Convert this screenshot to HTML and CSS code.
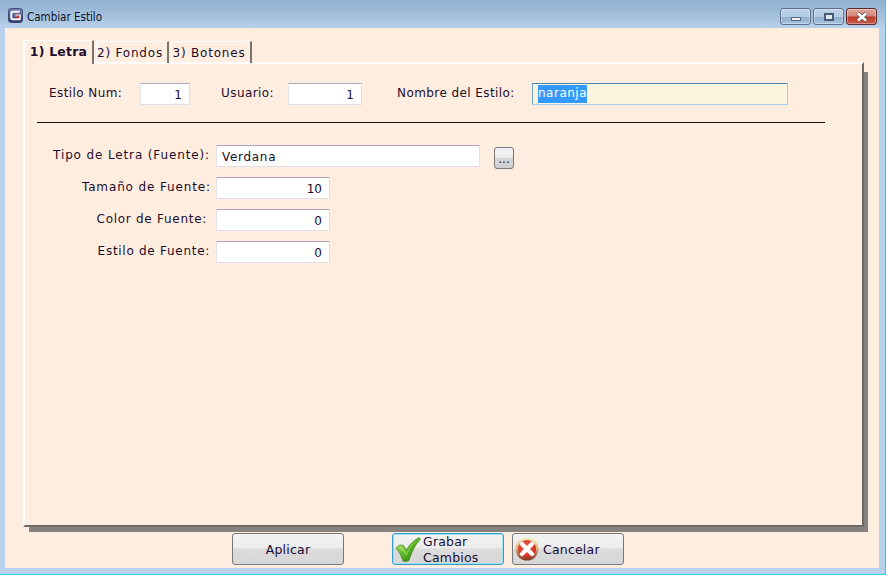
FILE: index.html
```html
<!DOCTYPE html>
<html lang="es">
<head>
<meta charset="utf-8">
<title>Cambiar Estilo</title>
<link rel="stylesheet" href="styles.css">
</head>
<body>
<div class="window">
  <header class="titlebar">
    <svg class="app-icon" width="15" height="15" viewBox="0 0 16 16">
      <defs><linearGradient id="ai" x1="0" y1="0" x2="0" y2="1"><stop offset="0" stop-color="#7f89b8"/><stop offset="1" stop-color="#2a3268"/></linearGradient></defs>
      <rect x="0.5" y="0.5" width="15" height="15" rx="3" fill="url(#ai)" stroke="#3c4470"/>
      <path d="M12.5 4H5.5Q3.5 4 3.5 6V10Q3.5 12 5.5 12H12.5V8H8" fill="none" stroke="#f2f4f8" stroke-width="2.2"/>
      <rect x="9" y="8" width="3" height="2.5" fill="#d8302c"/>
    </svg>
    <span class="title">Cambiar Estilo</span>
    <div class="caption-buttons">
      <div class="cap cap-min"><span class="glyph-min"></span></div>
      <div class="cap cap-max"><span class="glyph-max"></span></div>
      <div class="cap cap-close">
        <svg width="14" height="10" viewBox="0 0 14 10"><path d="M3 1.5L11 8.5M11 1.5L3 8.5" stroke="#555" stroke-width="4.2"/><path d="M3 1.5L11 8.5M11 1.5L3 8.5" stroke="#fff" stroke-width="2.6"/></svg>
      </div>
    </div>
  </header>
  <main class="client">
    <nav class="tabs">
      <div class="tab tab-active">1) Letra</div>
      <div class="tab tab-2">2) Fondos</div>
      <div class="tab tab-3">3) Botones</div>
    </nav>
    <section class="panel">
      <div class="top-row">
        <label class="lbl lbl-num">Estilo Num:</label>
        <div class="field f-num num">1</div>
        <label class="lbl lbl-usr">Usuario:</label>
        <div class="field f-usr num">1</div>
        <label class="lbl lbl-name">Nombre del Estilo:</label>
        <div class="field f-name"><span class="selected">naranja</span></div>
      </div>
      <hr class="rule">
      <div class="form">
        <label class="lbl row-lbl">Tipo de Letra (Fuente):</label>
        <div class="font-row">
          <div class="field f-font">Verdana</div>
          <div class="dots">...</div>
        </div>
        <label class="lbl row-lbl shift-r">Tamaño de Fuente:</label>
        <div class="field f-small num">10</div>
        <label class="lbl row-lbl shift-l tight">Color de Fuente:</label>
        <div class="field f-small num">0</div>
        <label class="lbl row-lbl tight">Estilo de Fuente:</label>
        <div class="field f-small num">0</div>
      </div>
    </section>
    <footer class="actions">
      <div class="btn">Aplicar</div>
      <div class="btn btn-focus">
        <svg class="btn-icon" width="26" height="28" viewBox="0 0 26 28">
          <defs><linearGradient id="ck" x1="0" y1="0" x2="1" y2="1"><stop offset="0" stop-color="#b4e86a"/><stop offset="0.5" stop-color="#5cb324"/><stop offset="1" stop-color="#1d6b0c"/></linearGradient></defs>
          <path d="M1 13Q4.500 8.500 8.500 10.500L11.500 15Q15.500 7 24 2.500L25.500 4Q18 12 14 25.500Q11 27.500 8 26Q6 19 1 13Z" fill="url(#ck)" stroke="#3d7f20" stroke-width="0.6"/>
          <path d="M3.500 12.500Q6 10.500 8 12.500L11.500 18Q15 10 21 6Q15 11 12 21Z" fill="#d6f5a0" opacity=".35"/>
        </svg>
        <span class="btn-two">Grabar<br>Cambios</span>
      </div>
      <div class="btn btn-cancel">
        <svg class="btn-icon" width="24" height="24" viewBox="0 0 24 24">
          <defs><radialGradient id="rd" cx="0.45" cy="0.4" r="0.65"><stop offset="0" stop-color="#f46a58"/><stop offset="1" stop-color="#c81f1a"/></radialGradient>
          <linearGradient id="rg" x1="0" y1="0" x2="0" y2="1"><stop offset="0" stop-color="#f8efc4"/><stop offset="0.5" stop-color="#e0ae74"/><stop offset="1" stop-color="#7d2d20"/></linearGradient></defs>
          <circle cx="12" cy="12" r="11.500" fill="url(#rg)"/>
          <circle cx="12" cy="12" r="9" fill="url(#rd)"/>
          <path d="M7 7L17 17M17 7L7 17" stroke="#fff" stroke-width="4.200" stroke-linecap="round"/>
        </svg>
        <span>Cancelar</span>
      </div>
    </footer>
  </main>
</div>
</body>
</html>
```
FILE: styles.css
```css
* { box-sizing: border-box; }
html, body { margin: 0; padding: 0; }
body { width: 886px; height: 575px; overflow: hidden; font-family: "DejaVu Sans", Verdana, sans-serif; font-size: 12px; color: #1c0d2c; }

.window { width: 886px; height: 575px; display: flex; flex-direction: column; background: #b9d1ec; border-bottom: 1px solid #2ccbe8; border-right: 1px solid #2ccbe8; padding-bottom: 6px; }

.titlebar { height: 28px; flex: none; display: flex; align-items: center; padding: 0 8px 0 8px; background: linear-gradient(to bottom, #8fb0d0 0, #a6c2de 60%, #b9d1ec 100%); }
.app-icon { flex: none; margin-top: 2px; }
.title { margin-left: 4px; margin-top: 6px; font-family: "DejaVu Sans Condensed", "Liberation Sans", sans-serif; font-size: 11.5px; color: #10102a; }
.caption-buttons { margin-left: auto; display: flex; gap: 2px; margin-top: 5px; }
.cap { height: 17px; border: 1px solid #5e6f8c; border-radius: 3px; display: flex; align-items: center; justify-content: center; box-shadow: inset 0 0 0 1px rgba(255,255,255,.35); }
.cap-min, .cap-max { width: 31px; background: linear-gradient(to bottom, #bcd2ea 0, #b4cbe5 50%, #8dabcb 52%, #a8c4e0 100%); }
.cap-close { width: 31px; background: linear-gradient(to bottom, #e0a79c 0, #d5857a 48%, #bb3a27 52%, #c9594a 100%); border-color: #5a2a30; }
.glyph-min { width: 10px; height: 4px; margin-top: 5px; background: #eef2f6; border: 1px solid #56617a; }
.glyph-max { width: 10px; height: 8px; background: #dfe7f0; border: 2px solid #4e5a74; }

.client { flex: 1; margin: 0 6px 0 5px; background: #ffeee0; padding: 11px 10px 0 18px; display: flex; flex-direction: column; min-height: 0; }

.tabs { display: flex; height: 24px; flex: none; align-items: flex-end; position: relative; z-index: 1; }
.tab { height: 22px; padding: 4px 4px 0 0; text-align: center; letter-spacing: 0.8px; border-top: 1px solid #fff; border-left: 1px solid #fff; border-right: 2px solid #77736f; }
.tab-active { width: 71px; height: 24px; font-weight: bold; font-size: 12.5px; letter-spacing: 0.2px; padding: 3px 0 0; border-left-width: 2px; margin-right: 2px; margin-bottom: -1px; background: #ffeee0; }
.tab-2 { width: 73px; margin-right: 2px; }
.tab-3 { width: 81px; }

.panel { flex: none; width: 841px; height: 465px; border-top: 2px solid #fff; border-left: 2px solid #fff; border-right: 2px solid #6d6966; border-bottom: 2px solid #6d6966; padding: 19px 0 0 0; position: relative; margin-top: -1px; }
.panel::before { content: ""; position: absolute; right: -6px; top: 8px; bottom: -7px; width: 4px; background: #858280; }
.panel::after { content: ""; position: absolute; left: 4px; right: -6px; bottom: -7px; height: 5px; background: #858280; }

.top-row { display: flex; align-items: center; height: 22px; }
.lbl { white-space: nowrap; letter-spacing: 0.42px; }
.lbl-num { margin-left: 24px; width: 91px; margin-top: -3px; }
.lbl-usr { margin-left: 31px; width: 67px; margin-top: -3px; }
.lbl-name { margin-left: 35px; width: 135px; margin-top: -3px; }

.field { height: 22px; line-height: 21px; background: #fff; border: 1px solid; border-color: #a9a9b4 #dfe0e6 #dfe0e6 #e3e3ea; padding: 1px 6px 0 5px; white-space: nowrap; letter-spacing: 0.7px; color: #1c0d2c; }
.num { text-align: right; padding-right: 7px; letter-spacing: 0; }
.f-num { width: 50px; }
.f-usr { width: 74px; }
.f-name { width: 256px; background: #fdf4df; border-color: #4f87a8 #a9d0ea #a9d0ea #6fa3c4; padding: 0 5px; line-height: 20px; letter-spacing: 0.5px; }
.selected { display: inline-block; height: 18px; line-height: 17px; margin-top: 1px; vertical-align: top; background: #3399ff; color: #fff; }

.rule { margin: 17px 0 0 12px; width: 788px; height: 1px; border: 0; background: #111; }

.form { margin-top: 22px; display: grid; grid-template-columns: 191px 1fr; row-gap: 10px; align-items: center; }
.row-lbl { text-align: right; height: 22px; line-height: 20px; padding-right: 6px; letter-spacing: 0.87px; }
.shift-r { padding-right: 5px; }
.shift-l { padding-right: 9px; }
.tight { letter-spacing: 0.72px; }
.form > .field { justify-self: start; }
.font-row { display: flex; align-items: flex-start; height: 22px; }
.f-font { width: 264px; }
.f-small { width: 114px; }
.dots { margin: 2px 0 0 14px; width: 20px; height: 22px; border: 1px solid #77777a; border-radius: 3px; background: linear-gradient(to bottom, #f2f2f2 0, #ececec 48%, #d6d6d6 50%, #d0d0d0 100%); text-align: center; line-height: 23px; font-size: 12px; }

.actions { display: flex; margin-top: 6px; padding-left: 209px; }
.btn { width: 112px; height: 32px; border: 1px solid #77777a; border-radius: 3px; background: linear-gradient(to bottom, #f3f3f3 0, #ececec 46%, #dcdcdc 50%, #d6d6d6 100%); display: flex; align-items: center; justify-content: center; letter-spacing: 0.2px; font-size: 12.5px; color: #180c38; }
.btn + .btn { margin-left: 8px; }
.btn:first-child { margin-right: 40px; }
.btn-focus { border-color: #2f9fd0; box-shadow: inset 0 0 0 1px #9fe0f6; justify-content: flex-start; padding-left: 2px; }
.btn-cancel { justify-content: flex-start; padding-left: 2px; }
.btn-icon { flex: none; }
.btn-two { margin-left: 2px; line-height: 16px; margin-top: 1px; }
.btn-cancel span { margin-left: 4px; }
```
